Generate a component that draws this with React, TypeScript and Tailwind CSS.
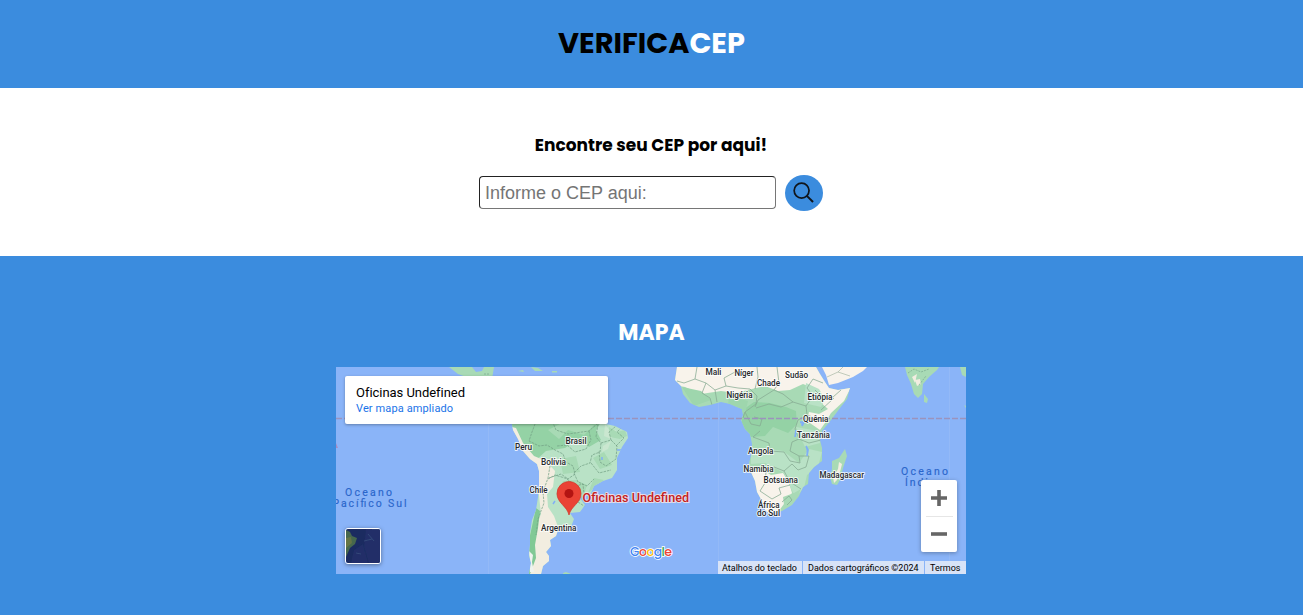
import React from "react";

type Label = { text: string; x: number; y: number; w: number };

const labels: Label[] = [
  { text: "Brasil", x: 565.5, y: 443.5, w: 21 },
  { text: "Peru", x: 515, y: 450, w: 17 },
  { text: "Bolívia", x: 541, y: 465, w: 25 },
  { text: "Chile", x: 529.5, y: 493, w: 18 },
  { text: "Argentina", x: 541, y: 530.5, w: 35.5 },
  { text: "Mali", x: 705.5, y: 375, w: 16 },
  { text: "Níger", x: 734.5, y: 376, w: 19 },
  { text: "Sudão", x: 785, y: 378, w: 23 },
  { text: "Chade", x: 757, y: 386, w: 23 },
  { text: "Nigéria", x: 726.5, y: 398, w: 26 },
  { text: "Etiópia", x: 807.5, y: 399.5, w: 25 },
  { text: "Quênia", x: 803, y: 421.5, w: 25.5 },
  { text: "Tanzânia", x: 797, y: 438, w: 33 },
  { text: "Angola", x: 748, y: 453.5, w: 25.5 },
  { text: "Namíbia", x: 743.5, y: 472, w: 30 },
  { text: "Botsuana", x: 763.5, y: 483, w: 34.5 },
  { text: "Madagascar", x: 819.5, y: 477.5, w: 44.5 },
  { text: "África", x: 758, y: 508, w: 21.5 },
  { text: "do Sul", x: 757, y: 516, w: 23 },
];

const southAmerica =
  "M508 418L512 424L513 430L518 439L523 451L530 459L537 464L539 471L539 485L538 497L536 510L532 520L530 533L530 545L529 555L531 563L529 574H541L543 566L549 561L549 556L546 552L551 546L550 540L556 536L558 530L571 527L574 519L570 513L580 512L585 505L580 498L591 493L594 486L603 481L612 478L617 470L617 458L622 447L628 438L627 432L615 426L606 424L600 418Z";
const africa =
  "M677 367L675 380L681 386L683 394L690 403L699 407L710 405L721 402L730 404L737 407L742 409L743 415L741 420L745 429L750 434L752 444L752 452L749 463L750 470L755 481L757 492L762 501L765 510L770 514L782 511L792 505L799 496L803 487L808 484L809 473L814 467L822 461L822 448L820 440L822 431L831 420L840 408L847 399L850 388L838 390L829 388L825 382L820 374L816 367Z";
const madagascar =
  "M845 449L847 456L843 468L840 480L837 485L832 484L830 477L832 469L832 461L839 458Z";

function WorldMap() {
  return (
    <svg className="block h-[207px] w-[630px]" viewBox="336 367 630 207" fontFamily="Roboto, sans-serif">
      <defs>
        <clipPath id="sa"><path d={southAmerica} /></clipPath>
        <clipPath id="af"><path d={africa} /></clipPath>
        <filter id="soft" x="-10%" y="-10%" width="120%" height="120%"><feGaussianBlur stdDeviation="0.7" /></filter>
      </defs>
      <rect x="336" y="367" width="630" height="207" fill="#8ab4f8" />
      <path d="M488.500 367V574M718.500 367V574M949.500 367V574" stroke="#93b9f7" strokeWidth="1" />

      <g fill="#a8dab5">
        <path d="M449 367L458 374L472 379H492L494 367H484L482 371L476 372L472 367Z" />
        <path d="M518 371L523 370L524 372ZM531 367L538 368L543 371L535 371ZM552 371H557V372.500H552Z" />
        <path d="M905 367L907 375L911 384L914 394L918 398L922 394L923 384L929 377L937 370L939 367Z" />
        <path d="M924 394L928 399L927 403L924 402ZM960 367L962 375L966 377V367ZM964 405L966 406V408ZM563 573L566 572L571 574H563Z" />
      </g>
      <path d="M915 380L920 379L921 384L917 386ZM912 377L917 374L915 383Z" fill="#f2ede0" />
      <path d="M484 374H489M908 373L914 369L921 372L929 369M919 385L926 376" fill="none" stroke="#79a88e" strokeWidth=".7" strokeDasharray="2 1" />

      <path d={southAmerica} fill="#b9e2c6" />
      <g clipPath="url(#sa)">
        <g filter="url(#soft)">
          <path d="M506 415H606L596 430L601 440L589 447L578 439L565 448L546 451L533 463L518 445Z" fill="#94d2a5" />
          <path d="M548 430L560 424L594 425L584 435L568 430L559 439ZM593 458L604 452L612 465L600 469ZM560 459L576 456L580 472L563 474Z" fill="#a8dab5" />
          <path d="M508 426L516 428L523 443L534 456L546 461L555 471L553 487L547 494L548 507L554 516L561 535L555 545L553 574H528L532 536L541 514L538 486L537 467L524 460L514 440Z" fill="#f2ede0" />
          <path d="M536 508L540 511L538 528L535 545L536 558L530 574H526L529 540Z" fill="#81c995" />
          <path d="M529 551L533 555L532 562L534 572H530Z" fill="#eef3ef" />
          <path d="M605 424L610 431L616 430L611 439L604 436ZM603 446L611 441L608 449L602 452Z" fill="#cae7d0" />
          <path d="M576 480L587 485L583 498L573 492L561 502L556 494L563 481ZM594 478L604 480L588 493Z" fill="#a8dab5" />
          <path d="M609 427L617 432L625 430L627 436L620 439L610 437Z" fill="#a8dab5" />
        </g>
        <path d="M535 424L532 432L529 441L539 446L547 445L555 450L563 454L566 462L573 466L575 474L568 479L555 475L548 479M551 418L556 430L568 434L589 431L597 424M589 431L591 440L586 449L575 452L567 445L557 446M598 424L596 437L601 443L600 452L592 455L590 463L581 466L574 473L578 482L587 486L594 479M601 443L611 440L617 446L616 459L606 466L600 462L599 451M611 440L609 432L616 426M616 446L624 438L617 432L622 427M550 466L548 478L543 492L544 503L538 519L536 535M567 479L576 486L583 484L584 494L578 502M549 478L561 474L568 479M578 502L587 508M591 463L599 473L611 470" fill="none" stroke="#719d82" strokeWidth=".7" strokeDasharray="2.500 1" />
        <path d="M553 504L555 501M560 499L562 502M602 457V460M617 450H621" stroke="#80aff6" strokeWidth="1.500" />
      </g>

      <path d={africa} fill="#a8dab5" />
      <g clipPath="url(#af)">
        <g filter="url(#soft)">
          <path d="M670 363H818L829 382L840 389L851 387L844 401L831 413L825 423L820 430L807 421L809 412L819 414L828 409L819 401L813 388L803 384L790 390L778 391L765 386L752 389L736 393L721 391L701 394L685 387L674 385Z" fill="#f8f3eb" />
          <path d="M744 409L754 402L770 403L786 407L796 411L797 424L788 433L773 427L765 436L751 437L741 426Z" fill="#94d2a5" />
          <path d="M747 467L763 470L771 475L783 473L789 483L792 493L781 508L769 515L758 501Z" fill="#f8f3eb" />
          <path d="M751 454L762 448L783 451L799 463L809 449L822 452L818 467L807 475L804 488L795 497L784 473L765 463L751 464Z" fill="#b9e2c6" />
          <path d="M682 387L701 391L711 400L694 406ZM729 396L748 401L745 414L728 405Z" fill="#9ed6ad" />
          <path d="M806 383L819 389L825 399L821 407L804 403ZM796 427L818 431L820 443L805 447Z" fill="#b9e2c6" />
          <path d="M786 508L796 499L801 489L794 493L783 497L784 505Z" fill="#a8dab5" />
        </g>
        <path d="M697 367L695 379L684 383L677 381M695 379L706 383L715 390L726 386L738 388L750 389L757 396L756 404L745 412L743 418M706 383L702 393L710 398L712 405M715 390L717 402M726 386L724 378L735 372M757 367L758 377L755 389M777 367L779 383L774 390L758 400L755 407M774 390L783 394L793 402L806 406L813 396L807 388L813 379L823 383M793 402L781 407L769 404L756 408M806 406L807 415L798 420L795 429L799 439L792 442L790 451L799 456L800 463L790 461L784 452L770 451L769 443L753 437M807 415L821 420M815 390L821 396L833 397L841 390M821 410L834 398M799 439L809 443L821 440M799 456L809 456L806 467L798 470L792 464L784 471L774 467L766 472L754 467M784 471L790 482L801 489M766 472L765 483L760 491L772 499L781 494L779 488L790 485M782 502L789 496L792 500L787 505M745 412L751 424L760 426L762 419L754 417M753 437L760 431" fill="none" stroke="#86a991" strokeWidth=".75" />
        <path d="M800 422L804 422L802 426M796 430L795 437M806 446L808 450L807 456" fill="#8ab4f8" stroke="#80aff6" strokeWidth="1.700" />
      </g>
      <path d="M822 367L826 375L829 385L838 383L853 377L863 371L867 367Z" fill="#f8f3eb" />
      <path d="M827 377L838 372L850 376M843 367L838 372" fill="none" stroke="#a8b7a5" strokeWidth=".7" />
      <path d={madagascar} fill="#a8dab5" />
      <path d="M839 462L842 464L840 472L837 480L834 483L833 477L838 469Z" fill="#f2ede0" />

      <path d="M336 418.500H966" stroke="#9b93bd" strokeWidth="1.300" strokeDasharray="6 2" />
      <path d="M336 443L338 448H336Z" fill="#a58cc2" />

      <g fontSize="8.500" fontWeight="500" fill="#26282b" stroke="#fff" strokeOpacity=".8" strokeWidth="2" strokeLinejoin="round" paintOrder="stroke">
        {labels.map((l) => (
          <text key={l.text} x={l.x} y={l.y} textLength={l.w} lengthAdjust="spacingAndGlyphs">{l.text}</text>
        ))}
      </g>
      <g fontSize="10.500" fill="#2a66cb" stroke="#2a66cb" strokeWidth=".15">
        <text x="345" y="495.500" textLength="47">Oceano</text>
        <text x="332.500" y="507" textLength="74">Pacífico Sul</text>
        <text x="901" y="474.500" textLength="47">Oceano</text>
        <text x="905" y="486" textLength="38">Índico</text>
      </g>
      <path d="M569 515C567 506 557 503 557 493.500A12 12 0 0 1 581 493.500C581 503 571 506 569 515Z" fill="#ea4335" stroke="#d33426" strokeWidth=".7" />
      <circle cx="569" cy="493.500" r="4.500" fill="#b31412" />
      <text x="582.500" y="502" fontSize="12.500" fontWeight="500" textLength="106.500" lengthAdjust="spacingAndGlyphs" fill="#c5221f" stroke="#fce8e6" strokeOpacity=".8" strokeWidth="2" paintOrder="stroke">Oficinas Undefined</text>
      <text x="630" y="555.500" fontFamily="Poppins, Lato, sans-serif" fontSize="12.500" fontWeight="500" textLength="42" stroke="#fff" strokeWidth="1.600" paintOrder="stroke">
        <tspan fill="#4285f4">G</tspan><tspan fill="#ea4335">o</tspan><tspan fill="#fbbc04">o</tspan><tspan fill="#4285f4">g</tspan><tspan fill="#34a853">l</tspan><tspan fill="#ea4335">e</tspan>
      </text>
    </svg>
  );
}

function SatelliteThumb() {
  return (
    <svg className="block h-full w-full" viewBox="0 0 34 34">
      <defs><filter id="thumb"><feGaussianBlur stdDeviation=".65" /></filter></defs>
      <rect width="34" height="34" fill="#1b2b60" />
      <g filter="url(#thumb)">
        <path d="M20 0H34V34H23L18 18ZM8 21L17 15L22 34H5Z" fill="#202f67" />
        <path d="M0 1L4 3L6 7L11 9L9 15L4 19L0 28Z" fill="#47684d" />
        <path d="M0 9L5 8L6 14L0 19Z" fill="#657544" />
        <path d="M10 24L15 25M22 5L28 12M18 12L26 10M26 0H33" stroke="#344779" />
      </g>
    </svg>
  );
}

export default function App() {
  return (
    <div className="flex h-[615px] flex-col overflow-hidden bg-white font-[Poppins,Inter,sans-serif] text-black">
      <header className="flex h-[88px] shrink-0 justify-center bg-[#3b8cde] pt-[26px]">
        <h1 className="text-[28.800px] leading-[35px] font-bold">
          VERIFICA<span className="text-white">CEP</span>
        </h1>
      </header>
      <main className="flex h-[168px] shrink-0 flex-col items-center pt-[45px]">
        <h2 className="mr-px text-[17px] leading-6 font-bold whitespace-nowrap">Encontre seu CEP por aqui!</h2>
        <form className="mt-[18px] mr-px flex items-start gap-[9px]" onSubmit={(e) => e.preventDefault()}>
          <input
            className="mt-px h-[33px] w-[297px] rounded-[4px] border border-t-[#222] border-r-[#767676] border-b-[#767676] border-l-[#222] px-[5px] pt-[2px] font-['Liberation_Sans',sans-serif] text-[18px] outline-none placeholder:text-[#757575]"
            placeholder="Informe o CEP aqui:"
          />
          <button className="flex h-9 w-[38px] items-center justify-center rounded-[50%] bg-[#3b8cde]" aria-label="Buscar">
            <svg className="mr-px mb-px h-[21px] w-[21px]" viewBox="0 0 22 22" fill="none" stroke="#10151b" strokeWidth="1.800">
              <circle cx="9" cy="9" r="7.800" />
              <path d="M14.500 14.500L21 21" strokeWidth="2.100" />
            </svg>
          </button>
        </form>
      </main>
      <section className="flex flex-1 flex-col items-center bg-[#3b8cde] pt-[62px]">
        <h2 className="text-[22px] leading-[30px] font-bold text-white">MAPA</h2>
        <div className="relative mt-[19px] mr-px h-[207px] w-[630px] overflow-hidden">
          <WorldMap />
          <div className="absolute top-[9px] left-[9px] flex h-12 w-[263px] flex-col rounded-[2px] bg-white px-[11px] pt-[9px] font-[Roboto,sans-serif] shadow-[0_1px_3px_rgba(0,0,0,0.3)]">
            <span className="text-[13px] leading-4 tracking-[-0.040px]">Oficinas Undefined</span>
            <a className="text-[11px] leading-[15px] tracking-[0.120px] text-[#1a73e8]">Ver mapa ampliado</a>
          </div>
          <div className="absolute bottom-[10px] left-[9px] h-9 w-9 overflow-hidden rounded-[3px] border border-white shadow-[0_1px_4px_rgba(0,0,0,0.4)]">
            <SatelliteThumb />
          </div>
          <div className="absolute top-[113px] right-[9px] flex h-[72px] w-9 flex-col items-center rounded-[2px] bg-white shadow-[0_1px_4px_rgba(0,0,0,0.3)]">
            <button className="flex h-9 w-9 items-center justify-center" aria-label="Aumentar">
              <svg className="h-4 w-4" viewBox="0 0 16 16"><path d="M6.200 0H9.800V6.200H16V9.800H9.800V16H6.200V9.800H0V6.200H6.200Z" fill="#666" /></svg>
            </button>
            <div className="h-px w-[27px] shrink-0 bg-[#e6e6e6]" />
            <button className="flex h-[34px] w-9 items-center justify-center" aria-label="Diminuir">
              <svg className="h-4 w-4" viewBox="0 0 16 16"><path d="M0 6.200H16V9.800H0Z" fill="#666" /></svg>
            </button>
          </div>
          <div className="absolute right-0 bottom-0 flex h-[13px] w-[248px] gap-px font-[Roboto,sans-serif] text-[9px] leading-[14px] whitespace-nowrap">
            <span className="w-[84px] bg-[#d8e3f7] pl-1">Atalhos do teclado</span>
            <span className="w-[121px] bg-[#d8e3f7] pl-[5px]">Dados cartográficos ©2024</span>
            <span className="w-[41px] bg-[#d8e3f7] pl-[5px]">Termos</span>
          </div>
        </div>
      </section>
    </div>
  );
}
